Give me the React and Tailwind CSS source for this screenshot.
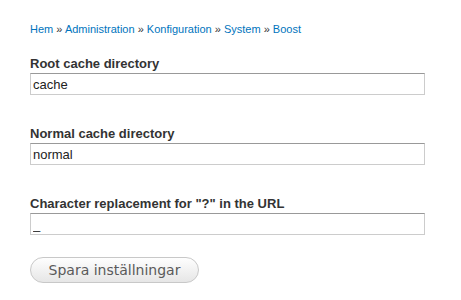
export default function App() {
    const fields = [
        { label: "Root cache directory", value: "cache" },
        { label: "Normal cache directory", value: "normal" },
        { label: 'Character replacement for "?" in the URL', value: "_" },
    ];

    return (
        <div className="w-[461px] h-[300px] bg-white pl-[30px] pt-[22px] font-['Liberation_Sans',Arial,sans-serif]">
            {/* Breadcrumb */}
            <div className="text-[11px] leading-[14px] text-[#333]">
                <a className="text-[#0074bd]">Hem</a> »{" "}
                <a className="text-[#0074bd]">Administration</a> »{" "}
                <a className="text-[#0074bd]">Konfiguration</a> »{" "}
                <a className="text-[#0074bd]">System</a> »{" "}
                <a className="text-[#0074bd]">Boost</a>
            </div>

            <div className="mt-[20px] flex flex-col gap-[31px]">
                {fields.map((f) => (
                    <div key={f.label} className="flex flex-col">
                        <label className="text-[13px] leading-[16px] font-bold text-[#333] mb-[1px]">
                            {f.label}
                        </label>
                        <input
                            readOnly
                            value={f.value}
                            className="w-[395px] h-[22px] border border-[#ccc] border-t-[#999] px-[2px] text-[13px] text-[#222] outline-none bg-white"
                        />
                    </div>
                ))}
            </div>

            <button className="mt-[22px] w-[169px] h-[26px] rounded-full border border-[#c8c8c8] bg-gradient-to-b from-[#fefefe] to-[#e6e6e6] text-[14px] text-[#5a5a5a] font-['DejaVu_Sans',sans-serif]">
                Spara inställningar
            </button>
        </div>
    );
}
